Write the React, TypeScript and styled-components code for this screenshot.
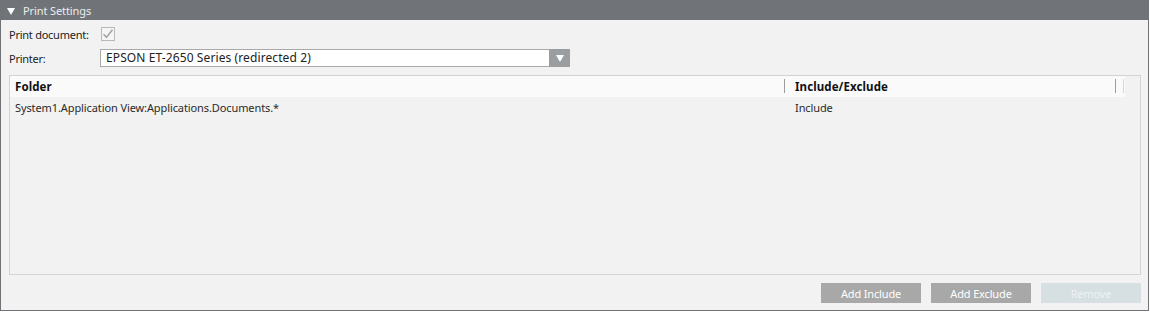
import React from "react";
import styled, { createGlobalStyle } from "styled-components";

const Global = createGlobalStyle`
  html, body { margin: 0; padding: 0; background: #ffffff; }
  body { font-family: "Noto Sans", "Open Sans", sans-serif; font-size: 11px; }
  * { box-sizing: border-box; }
`;

const Panel = styled.section`
  width: 1149px;
  height: 311px;
  border: 1px solid #6f7377;
  background: #f2f2f2;
  display: flex;
  flex-direction: column;
`;

const PanelHeader = styled.header`
  height: 19px;
  background: #707478;
  display: flex;
  align-items: center;
  padding-left: 6px;
  gap: 8px;
  color: #ececec;
  font-size: 11px;
  letter-spacing: -0.1px;
`;

const Caret = styled.span`
  width: 0;
  height: 0;
  border-left: 4.5px solid transparent;
  border-right: 4.5px solid transparent;
  border-top: 7px solid #ffffff;
  margin-top: 1px;
`;

const Body = styled.div`
  flex: 1;
  display: flex;
  flex-direction: column;
  padding: 6px 7px 0 8px;
`;

const FormRow = styled.div<{ $h: number; $mb: number }>`
  display: flex;
  align-items: center;
  height: ${(p) => p.$h}px;
  margin-bottom: ${(p) => p.$mb}px;
`;

const Label = styled.label`
  width: 91px;
  color: #222;
  font-size: 11px;
  letter-spacing: -0.25px;
`;

const CheckBox = styled.span`
  width: 14px;
  height: 14px;
  margin-left: 1px;
  border: 1px solid #b9b9b9;
  background: #f5f5f5;
  display: flex;
  align-items: center;
  justify-content: center;
`;

const Select = styled.div`
  width: 470px;
  height: 18px;
  display: flex;
  border: 1px solid #a9a9a9;
  border-right: none;
  background: #fff;
`;

const SelectValue = styled.span`
  flex: 1;
  padding-left: 5px;
  line-height: 16px;
  font-size: 12px;
  color: #222;
  letter-spacing: 0.1px;
`;

const SelectButton = styled.span`
  width: 21px;
  margin: -1px 0;
  background: #9a9ea1;
  display: flex;
  align-items: center;
  justify-content: center;
`;

const Arrow = styled.span`
  width: 0;
  height: 0;
  border-left: 4.5px solid transparent;
  border-right: 4.5px solid transparent;
  border-top: 7px solid #ffffff;
`;

const Grid = styled.div`
  height: 200px;
  border: 1px solid #d3d3d3;
  display: flex;
  flex-direction: column;
`;

const GridHeader = styled.div`
  display: grid;
  grid-template-columns: 775px 331px 8px;
  width: 1115px;
  height: 21px;
  background: #fafafa;
`;

const HeadCell = styled.div<{ $indent: number }>`
  display: flex;
  align-items: center;
  padding-left: ${(p) => p.$indent}px;
  font-weight: 700;
  font-size: 11.5px;
  color: #111;
  letter-spacing: 0.1px;
  position: relative;
  &::after {
    content: "";
    position: absolute;
    right: 0;
    top: 3px;
    height: 14px;
    width: 1px;
    background: #9c9c9c;
  }
`;

const LightSep = styled.div`
  position: relative;
  &::after {
    content: "";
    position: absolute;
    left: 7px;
    top: 3px;
    height: 14px;
    width: 1px;
    background: #d6d6d6;
  }
`;

const Row = styled.div`
  display: grid;
  grid-template-columns: 775px 331px;
  height: 21px;
  align-items: center;
  color: #2a2a2a;
  letter-spacing: -0.1px;
`;

const Cell = styled.div<{ $indent: number }>`
  padding-left: ${(p) => p.$indent}px;
`;

const Footer = styled.div`
  display: flex;
  justify-content: flex-end;
  gap: 10px;
  margin-top: 8px;
`;

const Button = styled.button<{ $disabled?: boolean }>`
  width: 100px;
  height: 20px;
  border: none;
  padding: 0;
  font-family: inherit;
  font-size: 11px;
  letter-spacing: -0.15px;
  background: ${(p) => (p.$disabled ? "#d6dfe2" : "#a8a8a8")};
  color: ${(p) => (p.$disabled ? "#eef2f4" : "#ffffff")};
`;

export default function App() {
  return (
    <>
      <Global />
      <Panel>
        <PanelHeader>
          <Caret />
          <span>Print Settings</span>
        </PanelHeader>
        <Body>
          <FormRow $h={16} $mb={7}>
            <Label>Print document:</Label>
            <CheckBox>
              <svg width="12" height="12" viewBox="0 0 12 12">
                <path d="M1.5 6.2 L4.5 9.3 L10.5 1.8" fill="none" stroke="#a6a6a6" strokeWidth="1.6" />
              </svg>
            </CheckBox>
          </FormRow>
          <FormRow $h={18} $mb={8}>
            <Label>Printer:</Label>
            <Select>
              <SelectValue>EPSON ET-2650 Series (redirected 2)</SelectValue>
              <SelectButton>
                <Arrow />
              </SelectButton>
            </Select>
          </FormRow>
          <Grid>
            <GridHeader>
              <HeadCell $indent={5}>Folder</HeadCell>
              <HeadCell $indent={10}>Include/Exclude</HeadCell>
              <LightSep />
            </GridHeader>
            <Row>
              <Cell $indent={5}>System1.Application View:Applications.Documents.*</Cell>
              <Cell $indent={10}>Include</Cell>
            </Row>
          </Grid>
          <Footer>
            <Button>Add Include</Button>
            <Button>Add Exclude</Button>
            <Button $disabled>Remove</Button>
          </Footer>
        </Body>
      </Panel>
    </>
  );
}
